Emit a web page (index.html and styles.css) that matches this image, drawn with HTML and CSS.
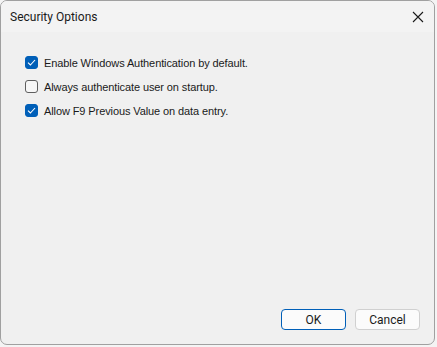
FILE: index.html
```html
<!DOCTYPE html>
<html lang="en">
<head>
    <meta charset="UTF-8">
    <title>Security Options</title>
    <link rel="stylesheet" href="styles.css">
</head>
<body>
    <div class="ventana">
        <div class="titulo">
            <span>Security Options</span>
            <svg class="cerrar" width="12" height="12" viewBox="0 0 12 12">
                <path d="M1 1 L11 11 M11 1 L1 11" stroke="#1a1a1a" stroke-width="1.1" fill="none"/>
            </svg>
        </div>
        <div class="cuerpo">
            <div class="opciones">
                <label class="opcion"><span class="caja marcada"><svg width="9" height="7" viewBox="0 0 9 7"><path d="M1 3.6 L3.4 6 L8 1" stroke="#fff" stroke-width="1.1" fill="none"/></svg></span>Enable Windows Authentication by default.</label>
                <label class="opcion"><span class="caja"></span>Always authenticate user on startup.</label>
                <label class="opcion"><span class="caja marcada"><svg width="9" height="7" viewBox="0 0 9 7"><path d="M1 3.6 L3.4 6 L8 1" stroke="#fff" stroke-width="1.1" fill="none"/></svg></span>Allow F9 Previous Value on data entry.</label>
            </div>
            <div class="botones">
                <button class="boton principal">OK</button>
                <button class="boton">Cancel</button>
            </div>
        </div>
    </div>
</body>
</html>
```
FILE: styles.css
```css
body {
    margin: 0;
    background: #f4f4f4;
    font-family: Roboto, "Liberation Sans", Arial, sans-serif;
    font-size: 12px;
    color: #1a1a1a;
}
.ventana {
    width: 433px;
    height: 343px;
    border: 1px solid #a0a0a0;
    border-radius: 7px;
    background: #f0f0f0;
    overflow: hidden;
    display: flex;
    flex-direction: column;
}
.titulo {
    height: 31px;
    background: #f3f3f3;
    display: flex;
    align-items: center;
    justify-content: space-between;
    padding: 0 10px 0 9px;
}
.cuerpo {
    flex: 1;
    display: flex;
    flex-direction: column;
    justify-content: space-between;
    padding: 24px 14px 14px 24px;
}
.opciones {
    display: flex;
    flex-direction: column;
    gap: 11px;
}
.opcion {
    display: flex;
    align-items: center;
    height: 13px;
    font-family: "Liberation Sans", Arial, sans-serif;
    font-size: 11px;
    letter-spacing: -0.1px;
}
.caja {
    width: 11px;
    height: 11px;
    border: 1px solid #5f5f5f;
    border-radius: 3px;
    background: #f7f7f7;
    margin-right: 6px;
    display: flex;
    align-items: center;
    justify-content: center;
}
.caja.marcada {
    background: #005fb8;
    border-color: #005fb8;
}
.botones {
    display: flex;
    justify-content: flex-end;
    gap: 9px;
}
.boton {
    width: 65px;
    height: 21px;
    font-family: Roboto, "Liberation Sans", Arial, sans-serif;
    font-size: 12px;
    color: #1a1a1a;
    background: #fbfbfb;
    border: 1px solid #d0d0d0;
    border-radius: 4px;
    padding: 0;
}
.boton.principal {
    border: 1px solid #005fb8;
}
```
